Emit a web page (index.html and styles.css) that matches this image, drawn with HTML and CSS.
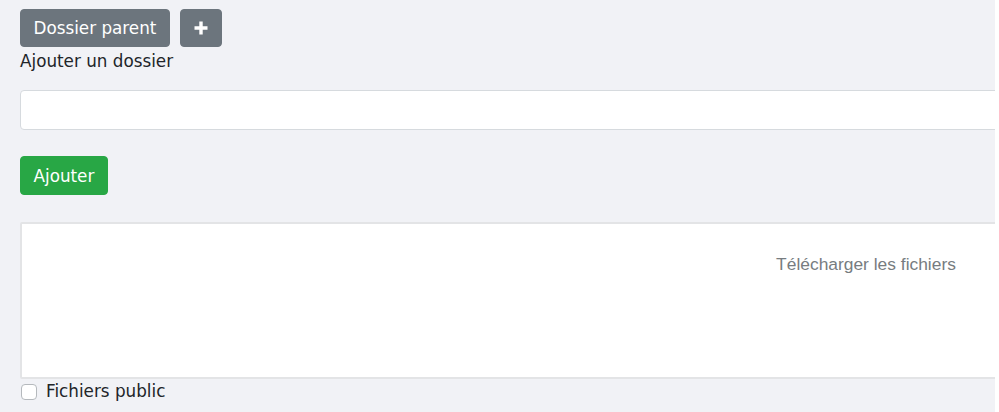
FILE: index.html
```html
<!DOCTYPE html>
<html lang="fr">
<head>
<meta charset="utf-8">
<title>Dossiers</title>
<link rel="stylesheet" href="styles.css">
</head>
<body>
<div class="page">
  <div class="toolbar">
    <button class="btn btn-gray">Dossier parent</button>
    <button class="btn btn-gray btn-icon" aria-label="Ajouter">
      <svg width="16" height="16" viewBox="0 0 16 16"><path d="M8 1.5v13M1.5 8h13" stroke="#fff" stroke-width="3.4" stroke-linecap="butt"/></svg>
    </button>
  </div>
  <label class="label" for="folder">Ajouter un dossier</label>
  <input id="folder" class="input" type="text">
  <div class="actions">
    <button class="btn btn-green">Ajouter</button>
  </div>
  <div class="dropzone">
    <div class="dz-message">Télécharger les fichiers</div>
  </div>
  <label class="check">
    <input type="checkbox" class="check-box">
    <span>Fichiers public</span>
  </label>
</div>
</body>
</html>
```
FILE: styles.css
```css
html, body {
  margin: 0;
  padding: 0;
  background: #ffffff;
}
.page {
  width: 995px;
  height: 412px;
  box-sizing: border-box;
  padding: 9px 0 0 20px;
  background: #f1f2f6;
  overflow: hidden;
  font-family: "DejaVu Sans", sans-serif;
  font-size: 16.8px;
  color: #212529;
}
.toolbar {
  display: flex;
  gap: 10px;
}
.btn {
  font-family: "DejaVu Sans", sans-serif;
  font-size: 16.8px;
  line-height: 24px;
  height: 38px;
  padding: 6px 12.5px;
  border: 1px solid transparent;
  border-radius: 4px;
  color: #fff;
  cursor: pointer;
  box-sizing: border-box;
}
.btn-gray {
  background: #6c757d;
  border-color: #6c757d;
}
.btn-icon {
  width: 42px;
  padding: 0;
  display: flex;
  align-items: center;
  justify-content: center;
}
.btn-green {
  background: #28a745;
  border-color: #28a745;
}
.label {
  display: block;
  line-height: 25px;
  height: 25px;
  margin-top: 2px;
}
.input {
  display: block;
  box-sizing: border-box;
  width: 1692px;
  height: 40px;
  margin-top: 16px;
  border: 1px solid #d6dade;
  border-radius: 4px;
  background: #fff;
}
.actions {
  margin-top: 26px;
}
.actions .btn {
  height: 39px;
}
.dropzone {
  box-sizing: border-box;
  width: 1692px;
  height: 157px;
  margin-top: 27px;
  background: #fff;
  border: 2px solid #e3e4e6;
  border-radius: 2px;
  padding-top: 30px;
}
.dz-message {
  text-align: center;
  font-family: "Liberation Sans", Arial, sans-serif;
  font-size: 17.4px;
  line-height: 20px;
  color: #777c80;
}
.check {
  display: flex;
  align-items: center;
  gap: 9px;
  margin-top: 0;
  line-height: 25px;
}
.check-box {
  appearance: none;
  -webkit-appearance: none;
  width: 16px;
  height: 16px;
  margin: 0 0 0 1px;
  border: 1px solid #b5b9bd;
  border-radius: 4px;
  background: #fff;
  box-sizing: border-box;
}
```
